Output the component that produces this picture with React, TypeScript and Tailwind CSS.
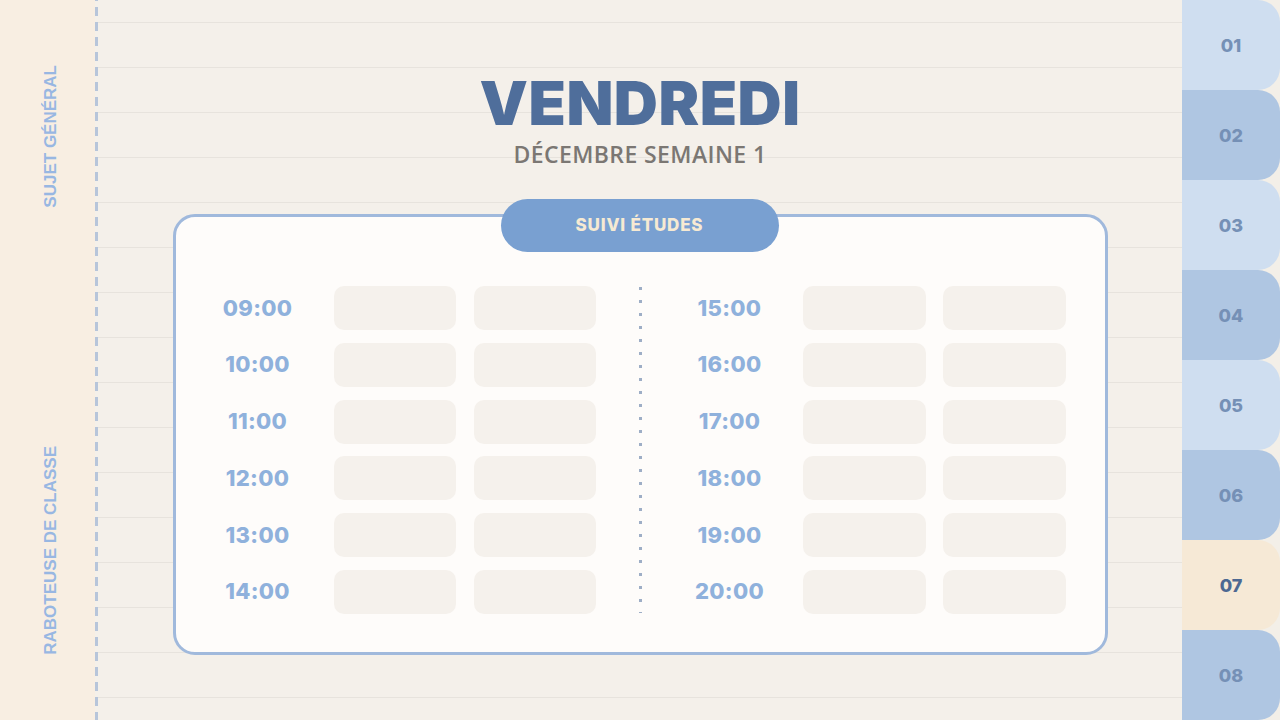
import React from "react";

const leftTimes = ["09:00", "10:00", "11:00", "12:00", "13:00", "14:00"];
const rightTimes = ["15:00", "16:00", "17:00", "18:00", "19:00", "20:00"];

const tabs = [
  { n: "01", cls: "bg-[#cfdef0] text-[#7590b6]" },
  { n: "02", cls: "bg-[#afc6e2] text-[#7590b6]" },
  { n: "03", cls: "bg-[#cfdef0] text-[#7590b6]" },
  { n: "04", cls: "bg-[#afc6e2] text-[#7590b6]" },
  { n: "05", cls: "bg-[#cfdef0] text-[#7590b6]" },
  { n: "06", cls: "bg-[#afc6e2] text-[#7590b6]" },
  { n: "07", cls: "bg-[#f6e9d6] text-[#4d6892]" },
  { n: "08", cls: "bg-[#afc6e2] text-[#7590b6]" },
];

const Row = ({ time, right }: { time: string; right?: boolean }) => {
  return (
    <div className="flex items-center h-[44px]">
      <div className="w-[120px] text-center text-[22px] font-extrabold text-[#8fb1dc] tracking-[0.3px]">
        {time}
      </div>
      <div className={right ? "ml-[13px] w-[123px] h-[44px] rounded-[10px] bg-[#f5f1ec]" : "ml-[16px] w-[122px] h-[44px] rounded-[10px] bg-[#f5f1ec]"} />
      <div className={right ? "ml-[17px] w-[123px] h-[44px] rounded-[10px] bg-[#f5f1ec]" : "ml-[18px] w-[122px] h-[44px] rounded-[10px] bg-[#f5f1ec]"} />
    </div>
  );
};

export default function App() {
  return (
    <div className="w-[1280px] h-[720px] flex overflow-hidden bg-[#f4f0ea] font-['Inter',sans-serif]">
      {/* left sidebar */}
      <div className="w-[95px] h-full bg-[#f8eee2] flex flex-col items-center pl-[6px] pt-[65px] font-['Liberation_Sans',Arial,sans-serif]">
        <div className="[writing-mode:vertical-rl] rotate-180 text-[17px] font-bold text-[#98b7e2] leading-none">
          SUJET GÉNÉRAL
        </div>
        <div className="mt-[238px] [writing-mode:vertical-rl] rotate-180 text-[17px] font-bold text-[#98b7e2] leading-none">
          RABOTEUSE DE CLASSE
        </div>
      </div>
      <div className="w-[3px] h-full bg-[linear-gradient(to_bottom,#b7c5da_0,#b7c5da_9px,transparent_9px)] bg-[length:3px_15px] bg-[position:0_7px]" />

      {/* main */}
      <div className="flex-1 h-full flex flex-col items-center pt-[73px] bg-[repeating-linear-gradient(to_bottom,transparent_0,transparent_22px,#e7e3dd_22px,#e7e3dd_23px,transparent_23px,transparent_45px)]">
        <div className="text-[61px] leading-none font-black text-[#4f6e9b] tracking-[0.5px]">VENDREDI</div>
        <div className="mt-[9px] text-[23px] leading-none font-semibold text-[#7b7773] tracking-[0.4px] font-['Open_Sans',sans-serif]">
          DÉCEMBRE SEMAINE 1
        </div>

        <div className="relative mt-[48px] w-[935px] h-[441px] rounded-[22px] border-[3px] border-[#a0b9dc] bg-[#fefcfa]">
          <div className="absolute -top-[18px] left-[325px] w-[278px] h-[53px] rounded-full bg-[#79a0d1] flex items-center justify-center text-[17px] font-extrabold text-[#f6ead3] tracking-[0.8px]">
            SUIVI ÉTUDES
          </div>

          <div className="flex pt-[69px] pl-[22px]">
            <div className="flex flex-col gap-[12.8px]">
              {leftTimes.map((t) => (
                <Row key={t} time={t} />
              ))}
            </div>
            <div className="ml-[43px] mt-[1px] w-[3px] h-[326px] bg-[linear-gradient(to_bottom,#9eaec6_0,#9eaec6_3px,transparent_3px)] bg-[length:3px_13px]" />
            <div className="ml-[28px] flex flex-col gap-[12.8px]">
              {rightTimes.map((t) => (
                <Row key={t} time={t} right />
              ))}
            </div>
          </div>
        </div>
      </div>

      {/* right tabs */}
      <div className="w-[98px] h-full flex flex-col bg-[#f3efe8]">
        {tabs.map((t) => (
          <div
            key={t.n}
            className={"h-[90px] rounded-r-[22px] flex items-center justify-center text-[18px] font-extrabold " + t.cls}
          >
            {t.n}
          </div>
        ))}
      </div>
    </div>
  );
}
